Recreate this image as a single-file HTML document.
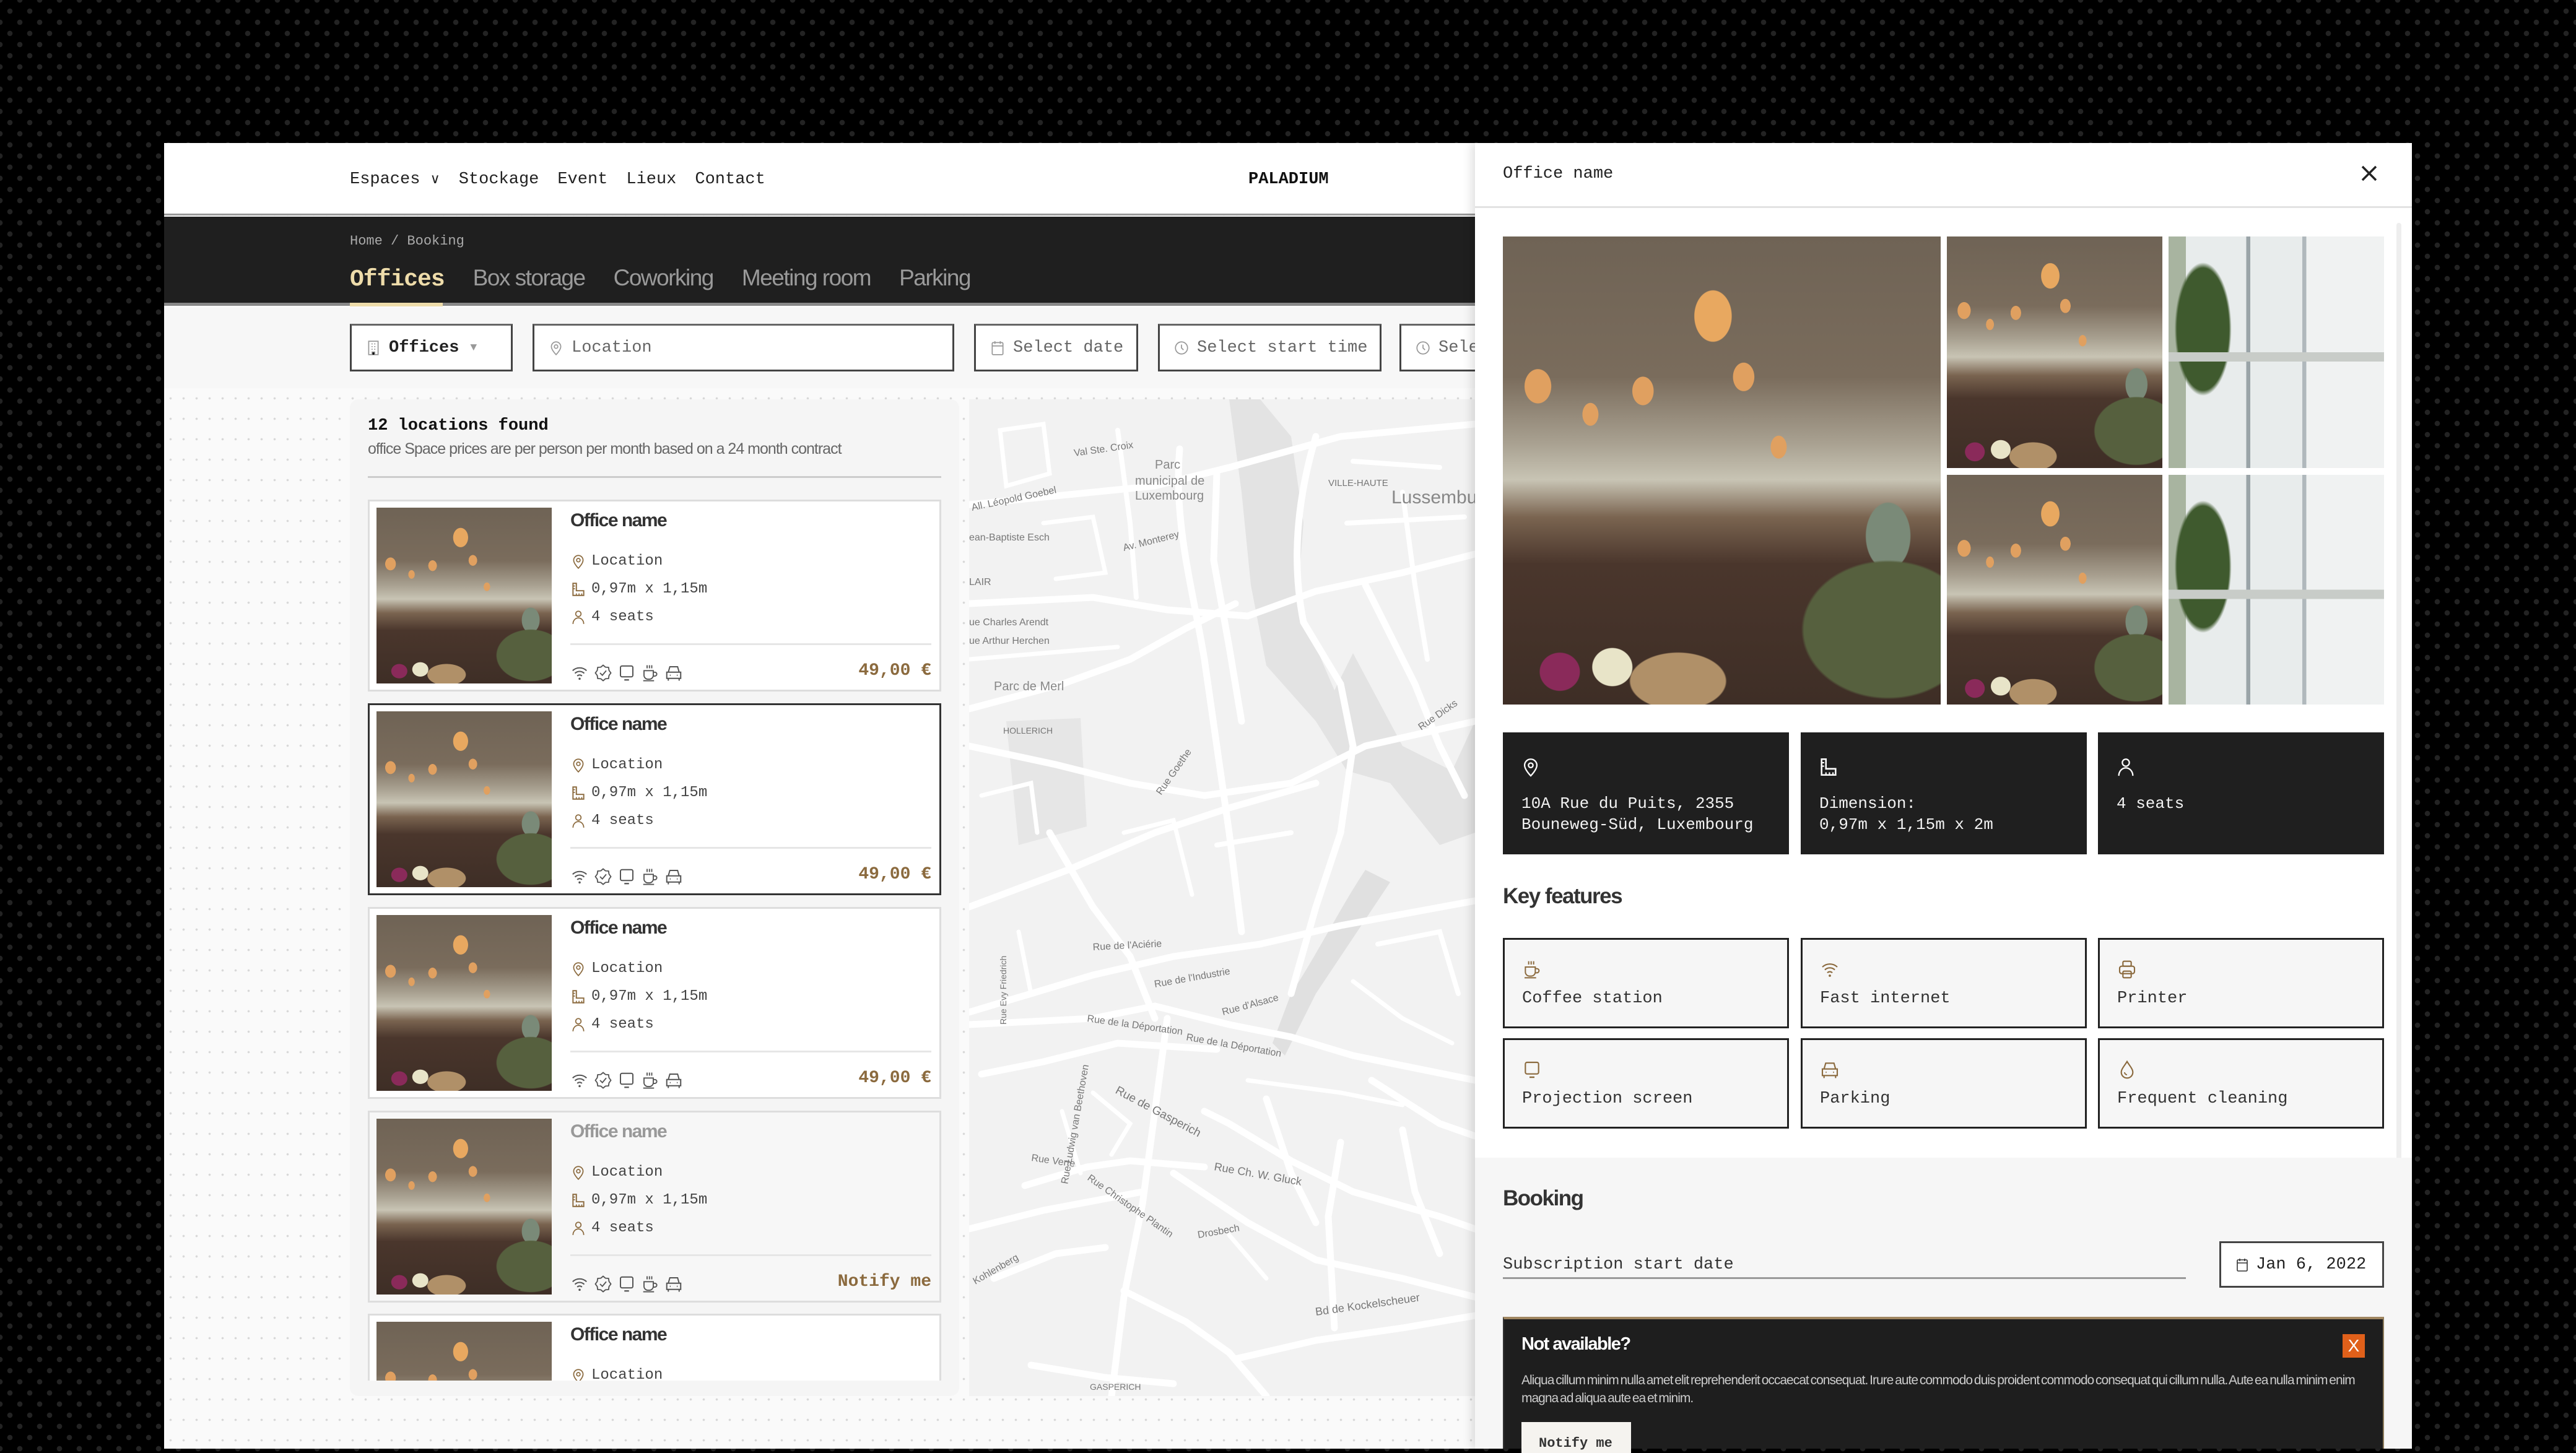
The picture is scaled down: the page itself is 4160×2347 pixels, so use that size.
<!DOCTYPE html>
<html><head><meta charset="utf-8">
<style>
*{box-sizing:border-box;margin:0;padding:0}
body{width:4160px;height:2340px;overflow:hidden;position:relative;background:#000;
background-image:radial-gradient(circle,#232323 4px,transparent 4.5px),radial-gradient(circle,#232323 4px,transparent 4.5px);
background-size:32px 36px,32px 36px;background-position:0 0,16px 18px;font-family:"Liberation Mono",monospace}
.a{position:absolute}
.mono{font-family:"Liberation Mono",monospace}
.sans{font-family:"Liberation Sans",sans-serif}
.ph{background:
radial-gradient(ellipse 7% 9% at 48% 17%,#e8a860 0 60%,transparent 62%),
radial-gradient(ellipse 5% 6% at 8% 32%,#e0a060 0 60%,transparent 62%),
radial-gradient(ellipse 4% 5% at 32% 33%,#e0a060 0 60%,transparent 62%),
radial-gradient(ellipse 4% 5% at 55% 30%,#e0a060 0 60%,transparent 62%),
radial-gradient(ellipse 3% 4% at 20% 38%,#e0a060 0 60%,transparent 62%),
radial-gradient(ellipse 3% 4% at 63% 45%,#e0a060 0 60%,transparent 62%),
radial-gradient(ellipse 9% 8% at 25% 92%,#e8e4c8 0 50%,transparent 52%),
radial-gradient(ellipse 9% 8% at 13% 93%,#8a2a5a 0 50%,transparent 52%),
radial-gradient(ellipse 18% 10% at 40% 95%,#b09068 0 60%,transparent 62%),
radial-gradient(ellipse 32% 24% at 88% 84%,#56603e 0 60%,transparent 62%),
radial-gradient(ellipse 10% 14% at 88% 64%,#7a8a78 0 50%,transparent 52%),
linear-gradient(to bottom,#6f6355 0%,#7a6c5c 30%,#a8a090 44%,#c8c4b4 52%,#7a6450 60%,#4a362c 70%,#3e2e26 100%);
background-size:100% 100%}
.win{background:
linear-gradient(to bottom,transparent 50%,#c8ccc8 50% 54%,transparent 54%),
radial-gradient(ellipse 22% 48% at 16% 40%,#3f5a2e 0 55%,transparent 60%),
linear-gradient(to right,#a8b4a0 0 8%,#e8ecec 8% 36%,#9aa4a8 36% 38%,#e8ecec 38% 62%,#b0b8bc 62% 64%,#f0f2f2 64%);
background-size:100% 100%}
.card{position:absolute;left:594px;width:926px;height:310px;background:#fff;border:3px solid #ddd}
.card .img{position:absolute;left:11px;top:10px;width:283px;height:284px}
.card .t{position:absolute;left:324px;top:14px;font:bold 30px "Liberation Sans",sans-serif;letter-spacing:-1.5px;color:#333}
.card .r{position:absolute;left:324px;font-size:24px;color:#444;display:flex;align-items:center;gap:8px}
.card .r svg{width:26px;height:26px}
.card .hr{position:absolute;left:324px;right:13px;top:229px;height:3px;background:#e6e6e6}
.card .ic{position:absolute;left:324px;top:262px;display:flex;gap:8px}
.card .ic svg{width:30px;height:30px}
.card .p{position:absolute;right:13px;top:258px;font:bold 28px "Liberation Mono",monospace;color:#8b6a3e}
.inp{position:absolute;top:523px;height:77px;background:#fff;border:3px solid #444;border-top-color:#666;display:flex;align-items:center;padding-left:22px;gap:12px;font-size:27px;color:#666;white-space:nowrap;overflow:hidden}
.inp svg{width:26px;height:30px;flex:none}
.info{position:absolute;top:1183px;width:462px;height:197px;background:#1f1f1f;color:#f2f2f2;font-size:26px;line-height:34px}
.info svg{position:absolute;left:28px;top:36px;width:34px;height:40px}
.info div{position:absolute;left:30px;top:98px}
.feat{position:absolute;width:462px;height:146px;background:#f6f6f6;border:3px solid #222;font-size:27px;color:#333}
.feat svg{position:absolute;left:28px;top:30px;width:32px;height:36px}
.feat div{position:absolute;left:28px;top:80px}
</style></head><body>
<svg width="0" height="0" style="position:absolute">
<defs>
<symbol id="pin" viewBox="0 0 24 24"><path d="M12 22s7-7 7-12a7 7 0 0 0-14 0c0 5 7 12 7 12z" fill="none" stroke="currentColor" stroke-width="1.6"/><circle cx="12" cy="10" r="2.6" fill="none" stroke="currentColor" stroke-width="1.6"/></symbol>
<symbol id="rul" viewBox="0 0 24 24"><path d="M4 3h5v11h11v7H4z" fill="none" stroke="currentColor" stroke-width="1.8"/><path d="M4 7h3M4 11h3M9 21v-3M13 21v-3M17 21v-3" stroke="currentColor" stroke-width="1.5"/></symbol>
<symbol id="per" viewBox="0 0 24 24"><circle cx="12" cy="7" r="4" fill="none" stroke="currentColor" stroke-width="1.6"/><path d="M4 22c0-5 3.5-9 8-9s8 4 8 9" fill="none" stroke="currentColor" stroke-width="1.6"/></symbol>
<symbol id="wifi" viewBox="0 0 24 24"><path d="M3 9a13 13 0 0 1 18 0M6 12.5a8.5 8.5 0 0 1 12 0M9 16a4 4 0 0 1 6 0" fill="none" stroke="currentColor" stroke-width="1.6"/><circle cx="12" cy="19.5" r="1.4" fill="currentColor"/></symbol>
<symbol id="bad" viewBox="0 0 24 24"><path d="M12 2l3 2.5 4 .3.6 3.9 2.4 3.3-2.4 3.3-.6 3.9-4 .3L12 22l-3-2.5-4-.3-.6-3.9L2 12l2.4-3.3.6-3.9 4-.3z" fill="none" stroke="currentColor" stroke-width="1.5"/><path d="M8 12l3 3 5-6" fill="none" stroke="currentColor" stroke-width="1.5"/></symbol>
<symbol id="mon" viewBox="0 0 24 24"><rect x="4" y="3" width="16" height="14" rx="2" fill="none" stroke="currentColor" stroke-width="1.6"/><path d="M9 21h6" stroke="currentColor" stroke-width="1.8"/></symbol>
<symbol id="cup" viewBox="0 0 24 24"><path d="M4 9h12v6a5 5 0 0 1-5 5H9a5 5 0 0 1-5-5z M16 11h2a2 2 0 0 1 0 5h-2M3 22h14M8 2v4M11 2v4M14 2v4" fill="none" stroke="currentColor" stroke-width="1.5"/></symbol>
<symbol id="car" viewBox="0 0 24 24"><path d="M5 11l2-7h10l2 7M3 11h18v8H3zM5 19v3M19 19v3M7 15h1M16 15h1" fill="none" stroke="currentColor" stroke-width="1.6"/></symbol>
<symbol id="prn" viewBox="0 0 24 24"><rect x="7" y="2" width="10" height="6" rx="1.5" fill="none" stroke="currentColor" stroke-width="1.6"/><rect x="3" y="8" width="18" height="9" rx="2.5" fill="none" stroke="currentColor" stroke-width="1.6"/><rect x="7" y="14" width="10" height="8" rx="1.5" fill="none" stroke="currentColor" stroke-width="1.6"/></symbol>
<symbol id="drop" viewBox="0 0 24 24"><path d="M12 2c3 5 7 9 7 13a7 7 0 0 1-14 0c0-4 4-8 7-13z" fill="none" stroke="currentColor" stroke-width="1.6"/><path d="M9 15a3 3 0 0 0 3 3" fill="none" stroke="currentColor" stroke-width="1.4"/></symbol>
<symbol id="cal" viewBox="0 0 24 24"><rect x="4" y="4" width="16" height="18" rx="1.5" fill="none" stroke="currentColor" stroke-width="1.6"/><path d="M4 9h16M8 2v4M16 2v4" stroke="currentColor" stroke-width="1.6"/></symbol>
<symbol id="clk" viewBox="0 0 24 24"><circle cx="12" cy="12" r="9" fill="none" stroke="currentColor" stroke-width="1.6"/><path d="M12 7v5l3 3" fill="none" stroke="currentColor" stroke-width="1.6"/></symbol>
<symbol id="bld" viewBox="0 0 24 24"><rect x="5" y="2" width="14" height="20" fill="none" stroke="currentColor" stroke-width="1.6"/><path d="M9 6h2M13 6h2M9 10h2M13 10h2M9 14h2M13 14h2M10 22v-4h4v4" stroke="currentColor" stroke-width="1.4"/></symbol>
</defs></svg>

<div class="a" style="left:265px;top:231px;width:3630px;height:2109px;background:#fafafa;
background-image:radial-gradient(circle,#d8d8d8 1.6px,transparent 2px);background-size:21px 33px"></div>
<div class="a" style="left:265px;top:231px;width:2120px;height:117px;background:#fff;border-bottom:3px solid #999"></div>
<div class="a mono" style="left:565px;top:275px;font-size:27px;color:#222;display:flex;gap:30px">
<span>Espaces <span style="font-size:22px">&#8744;</span></span><span>Stockage</span><span>Event</span><span>Lieux</span><span>Contact</span></div>
<div class="a mono" style="left:2016px;top:275px;font-size:27px;font-weight:bold;color:#111">PALADIUM</div>
<div class="a" style="left:265px;top:350px;width:2120px;height:144px;background:#1f1f1f;border-bottom:5px solid #888"></div>
<div class="a mono" style="left:565px;top:377px;font-size:22px;color:#aaa">Home / Booking</div>
<div class="a" style="left:565px;top:428px;display:flex;gap:46px;align-items:baseline">
<span class="mono" style="font-size:38px;font-weight:bold;color:#eedcaa;letter-spacing:-1px">Offices</span>
<span class="sans" style="font-size:37px;color:#9a9a9a;letter-spacing:-1.5px">Box storage</span>
<span class="sans" style="font-size:37px;color:#9a9a9a;letter-spacing:-1.5px">Coworking</span>
<span class="sans" style="font-size:37px;color:#9a9a9a;letter-spacing:-1.5px">Meeting room</span>
<span class="sans" style="font-size:37px;color:#9a9a9a;letter-spacing:-1.5px">Parking</span></div>
<div class="a" style="left:565px;top:489px;width:150px;height:6px;background:#eedcaa"></div>
<div class="a" style="left:265px;top:497px;width:2120px;height:130px;background:#f7f7f7"></div>
<div class="inp" style="left:565px;width:263px;color:#222;font-weight:bold"><svg style="color:#999"><use href="#bld"/></svg>Offices <span style="color:#999;font-size:18px;margin-left:6px">&#9660;</span></div>
<div class="inp" style="left:860px;width:681px"><svg style="color:#999"><use href="#pin"/></svg>Location</div>
<div class="inp" style="left:1573px;width:265px"><svg style="color:#999"><use href="#cal"/></svg>Select date</div>
<div class="inp" style="left:1870px;width:361px"><svg style="color:#999"><use href="#clk"/></svg>Select start time</div>
<div class="inp" style="left:2260px;width:340px"><svg style="color:#999"><use href="#clk"/></svg>Select end time</div>

<div class="a" style="left:565px;top:645px;width:984px;height:1610px;background:#f5f5f5;border-radius:14px"></div>
<div class="a mono" style="left:594px;top:673px;font-size:27px;font-weight:bold;color:#111">12 locations found</div>
<div class="a sans" style="left:594px;top:711px;font-size:25px;color:#666;letter-spacing:-1px">office Space prices are per person per month based on a 24 month contract</div>
<div class="a" style="left:594px;top:769px;width:926px;height:3px;background:#ccc"></div>

<div class="a" style="left:565px;top:790px;width:984px;height:1440px;overflow:hidden">
<div style="position:relative;left:-565px;top:-790px">
<div class="card" style="top:807px"><div class="img ph"></div><div class="t">Office name</div>
<div class="r" style="top:83px"><svg style="color:#8b6a3e"><use href="#pin"/></svg>Location</div>
<div class="r" style="top:128px"><svg style="color:#8b6a3e"><use href="#rul"/></svg>0,97m x 1,15m</div>
<div class="r" style="top:173px"><svg style="color:#8b6a3e"><use href="#per"/></svg>4 seats</div>
<div class="hr"></div><div class="ic" style="color:#555"><svg><use href="#wifi"/></svg><svg><use href="#bad"/></svg><svg><use href="#mon"/></svg><svg><use href="#cup"/></svg><svg><use href="#car"/></svg></div>
<div class="p">49,00 €</div></div>

<div class="card" style="top:1136px;border-color:#333"><div class="img ph"></div><div class="t">Office name</div>
<div class="r" style="top:83px"><svg style="color:#8b6a3e"><use href="#pin"/></svg>Location</div>
<div class="r" style="top:128px"><svg style="color:#8b6a3e"><use href="#rul"/></svg>0,97m x 1,15m</div>
<div class="r" style="top:173px"><svg style="color:#8b6a3e"><use href="#per"/></svg>4 seats</div>
<div class="hr"></div><div class="ic" style="color:#555"><svg><use href="#wifi"/></svg><svg><use href="#bad"/></svg><svg><use href="#mon"/></svg><svg><use href="#cup"/></svg><svg><use href="#car"/></svg></div>
<div class="p">49,00 €</div></div>

<div class="card" style="top:1465px"><div class="img ph"></div><div class="t">Office name</div>
<div class="r" style="top:83px"><svg style="color:#8b6a3e"><use href="#pin"/></svg>Location</div>
<div class="r" style="top:128px"><svg style="color:#8b6a3e"><use href="#rul"/></svg>0,97m x 1,15m</div>
<div class="r" style="top:173px"><svg style="color:#8b6a3e"><use href="#per"/></svg>4 seats</div>
<div class="hr"></div><div class="ic" style="color:#555"><svg><use href="#wifi"/></svg><svg><use href="#bad"/></svg><svg><use href="#mon"/></svg><svg><use href="#cup"/></svg><svg><use href="#car"/></svg></div>
<div class="p">49,00 €</div></div>

<div class="card" style="top:1794px;background:#f7f7f7"><div class="img ph"></div><div class="t" style="color:#999">Office name</div>
<div class="r" style="top:83px"><svg style="color:#8b6a3e"><use href="#pin"/></svg>Location</div>
<div class="r" style="top:128px"><svg style="color:#8b6a3e"><use href="#rul"/></svg>0,97m x 1,15m</div>
<div class="r" style="top:173px"><svg style="color:#8b6a3e"><use href="#per"/></svg>4 seats</div>
<div class="hr"></div><div class="ic" style="color:#555"><svg><use href="#wifi"/></svg><svg><use href="#bad"/></svg><svg><use href="#mon"/></svg><svg><use href="#cup"/></svg><svg><use href="#car"/></svg></div>
<div class="p">Notify me</div></div>

<div class="card" style="top:2122px"><div class="img ph"></div><div class="t">Office name</div>
<div class="r" style="top:83px"><svg style="color:#8b6a3e"><use href="#pin"/></svg>Location</div></div>
</div></div>

<svg class="a" style="left:1565px;top:645px" width="817" height="1610" viewBox="0 0 817 1610">
<rect width="817" height="1610" fill="#f2f2f2"/>
<path d="M470 0 L520 60 L540 200 L530 330 L590 470 L620 410 L700 560 L780 600 L817 520 L817 700 L760 720 L680 620 L610 600 L560 520 L480 430 L455 300 L440 150 L420 0Z" fill="#e3e3e3"/>
<path d="M60 520 L180 515 L190 690 L80 720Z" fill="#e6e6e6"/>
<path d="M640 760 C600 820 560 900 520 960 L490 1040 L510 1060 L560 960 C600 900 640 840 680 780Z" fill="#e0e0e0"/>
<g stroke="#fff" stroke-width="11" fill="none" stroke-linecap="round">
<path d="M0 170 L300 140 L420 110 L600 60 L817 40"/>
<path d="M0 330 L200 320 L320 340 L450 350 L560 310 L700 280 L817 250"/>
<path d="M0 500 L150 460 L260 420 L350 370 L430 330"/>
<path d="M0 560 L140 590 L260 620 L380 640 L520 620 L640 560 L817 520"/>
<path d="M340 80 C330 200 360 300 380 420 L400 560 L420 700 L440 860"/>
<path d="M400 120 L395 260 L420 400 L440 520"/>
<path d="M560 60 C530 160 520 260 540 360 L600 460 L620 560 L600 700 L560 820 L520 960"/>
<path d="M640 300 L680 380 L720 460 L760 560 L800 640"/>
<path d="M130 700 L200 820 L260 900 L300 1000"/>
<path d="M0 820 L160 760 L300 700 L420 660 L560 620"/>
<path d="M0 990 L200 930 L330 900 L470 880 L600 850 L817 810"/>
<path d="M0 1010 L200 1000 L300 980 L420 1010 L520 1030 L620 1060 L817 1100"/>
<path d="M20 1090 L120 1070 L240 1040 L400 1050"/>
<path d="M320 1000 L300 1150 L280 1300 L250 1450 L230 1610"/>
<path d="M380 1150 L420 1170 L520 1230 L620 1280 L760 1320 L817 1340"/>
<path d="M90 1270 L190 1240 L260 1230 L380 1240"/>
<path d="M0 1340 L120 1310 L280 1280"/>
<path d="M250 1440 L350 1490 L420 1540 L480 1610"/>
<path d="M430 1550 L560 1520 L700 1500 L817 1480"/>
<path d="M330 1250 L450 1330 L560 1390 L700 1420 L817 1450"/>
<path d="M600 1200 L580 1320 L590 1500"/>
<path d="M480 1130 L520 1250 L560 1330"/>
<path d="M700 1180 L720 1280 L760 1380"/>
<path d="M650 1100 L760 1170 L817 1190"/>
<path d="M40 1420 L140 1380 L220 1370"/>
<path d="M100 1560 L220 1580 L330 1590"/>
<path d="M50 50 L120 40 L130 120 L60 140Z" stroke-width="7"/>
<path d="M240 50 L260 200 L270 320" stroke-width="8"/>
<path d="M120 200 L200 190 L220 280 L140 290" stroke-width="7"/>
<path d="M700 150 L720 300 L740 420" stroke-width="8"/>
<path d="M620 100 L760 110" stroke-width="8"/>
<path d="M610 200 L800 190" stroke-width="8"/>
<path d="M20 640 L100 620 L110 700" stroke-width="7"/>
<path d="M250 700 L330 680 L360 800" stroke-width="7"/>
<path d="M400 720 L520 700" stroke-width="8"/>
<path d="M660 880 L760 860 L790 960" stroke-width="8"/>
<path d="M200 1120 L260 1170 L230 1220" stroke-width="7"/>
<path d="M420 1350 L480 1420" stroke-width="7"/>
<path d="M0 420 L120 410 L240 400" stroke-width="7"/>
<path d="M80 860 L100 960" stroke-width="7"/>
<path d="M150 1150 L180 1250" stroke-width="7"/>
<path d="M620 940 L700 1000 L780 1040" stroke-width="7"/>
<path d="M450 1100 L600 1120 L700 1140" stroke-width="7"/>
</g>
<g font-family="Liberation Sans, sans-serif" fill="#777" font-size="16">
<text x="170" y="92" transform="rotate(-8 170 92)">Val Ste. Croix</text>
<text x="5" y="180" transform="rotate(-12 5 180)">All. Léopold Goebel</text>
<text x="0" y="228">ean-Baptiste Esch</text>
<text x="0" y="300">LAIR</text>
<text x="0" y="365">ue Charles Arendt</text>
<text x="0" y="395">ue Arthur Herchen</text>
<text x="300" y="112" font-size="20" fill="#888">Parc</text>
<text x="268" y="138" font-size="20" fill="#888">municipal de</text>
<text x="268" y="162" font-size="20" fill="#888">Luxembourg</text>
<text x="580" y="140" font-size="15">VILLE-HAUTE</text>
<text x="682" y="168" font-size="30" fill="#888">Lussembur</text>
<text x="40" y="470" font-size="20" fill="#888">Parc de Merl</text>
<text x="55" y="540" font-size="14">HOLLERICH</text>
<text x="250" y="245" transform="rotate(-14 250 245)">Av. Monterey</text>
<text x="310" y="640" transform="rotate(-55 310 640)">Rue Goethe</text>
<text x="730" y="535" transform="rotate(-35 730 535)">Rue Dicks</text>
<text x="200" y="890" transform="rotate(-3 200 890)">Rue de l'Aciérie</text>
<text x="300" y="950" transform="rotate(-10 300 950)">Rue de l'Industrie</text>
<text x="190" y="1005" transform="rotate(8 190 1005)">Rue de la Déportation</text>
<text x="350" y="1035" transform="rotate(10 350 1035)">Rue de la Déportation</text>
<text x="410" y="995" transform="rotate(-15 410 995)">Rue d'Alsace</text>
<text x="235" y="1120" font-size="19" transform="rotate(28 235 1120)">Rue de Gasperich</text>
<text x="60" y="1010" transform="rotate(-90 60 1010)" font-size="14">Rue Evy Friedrich</text>
<text x="60" y="1150" transform="rotate(-80 180 1150)">Rue Ludwig van Beethoven</text>
<text x="100" y="1230" transform="rotate(8 100 1230)">Rue Verte</text>
<text x="395" y="1245" font-size="18" transform="rotate(10 395 1245)">Rue Ch. W. Gluck</text>
<text x="190" y="1260" transform="rotate(35 190 1260)">Rue Christophe Plantin</text>
<text x="370" y="1355" transform="rotate(-10 370 1355)">Drosbech</text>
<text x="560" y="1480" font-size="18" transform="rotate(-8 560 1480)">Bd de Kockelscheuer</text>
<text x="195" y="1600" font-size="14">GASPERICH</text>
<text x="10" y="1430" transform="rotate(-30 10 1430)">Kohlenberg</text>
</g>
</svg>

<div class="a" style="left:2382px;top:231px;width:1513px;height:2109px;background:#fff;box-shadow:-6px 0 14px rgba(0,0,0,.12)"></div>
<div class="a mono" style="left:2427px;top:266px;font-size:27px;color:#222">Office name</div>
<svg class="a" style="left:3812px;top:266px" width="28" height="28" viewBox="0 0 28 28"><path d="M3 3L25 25M25 3L3 25" stroke="#222" stroke-width="3.5"/></svg>
<div class="a" style="left:2382px;top:333px;width:1513px;height:3px;background:#e2e2e2"></div>
<div class="a" style="left:3870px;top:360px;width:8px;height:1780px;background:#eee;border-radius:4px"></div>
<div class="a ph" style="left:2427px;top:382px;width:707px;height:756px"></div>
<div class="a ph" style="left:3144px;top:382px;width:348px;height:374px"></div>
<div class="a win" style="left:3502px;top:382px;width:348px;height:374px"></div>
<div class="a ph" style="left:3144px;top:767px;width:348px;height:371px"></div>
<div class="a win" style="left:3502px;top:767px;width:348px;height:371px"></div>

<div class="info" style="left:2427px"><svg style="color:#fff"><use href="#pin"/></svg><div>10A Rue du Puits, 2355<br>Bouneweg-Süd, Luxembourg</div></div>
<div class="info" style="left:2908px"><svg style="color:#fff"><use href="#rul"/></svg><div>Dimension:<br>0,97m x 1,15m x 2m</div></div>
<div class="info" style="left:3388px"><svg style="color:#fff"><use href="#per"/></svg><div>4 seats</div></div>

<div class="a sans" style="left:2427px;top:1428px;font-size:35px;font-weight:bold;color:#333;letter-spacing:-1.5px">Key features</div>
<div class="feat" style="left:2427px;top:1515px"><svg style="color:#8b6a3e"><use href="#cup"/></svg><div>Coffee station</div></div>
<div class="feat" style="left:2908px;top:1515px"><svg style="color:#8b6a3e"><use href="#wifi"/></svg><div>Fast internet</div></div>
<div class="feat" style="left:3388px;top:1515px"><svg style="color:#8b6a3e"><use href="#prn"/></svg><div>Printer</div></div>
<div class="feat" style="left:2427px;top:1677px"><svg style="color:#8b6a3e"><use href="#mon"/></svg><div>Projection screen</div></div>
<div class="feat" style="left:2908px;top:1677px"><svg style="color:#8b6a3e"><use href="#car"/></svg><div>Parking</div></div>
<div class="feat" style="left:3388px;top:1677px"><svg style="color:#8b6a3e"><use href="#drop"/></svg><div>Frequent cleaning</div></div>

<div class="a" style="left:2382px;top:1870px;width:1513px;height:470px;background:#f6f6f6"></div>
<div class="a sans" style="left:2427px;top:1916px;font-size:35px;font-weight:bold;color:#333;letter-spacing:-1.5px">Booking</div>
<div class="a mono" style="left:2427px;top:2028px;font-size:27px;color:#333">Subscription start date</div>
<div class="a" style="left:2427px;top:2063px;width:1103px;height:3px;background:#999"></div>
<div class="a mono" style="left:3584px;top:2005px;width:266px;height:75px;background:#fff;border:3px solid #444;display:flex;align-items:center;padding-left:22px;gap:10px;font-size:27px;color:#222"><svg width="24" height="30" style="color:#333"><use href="#cal"/></svg>Jan 6, 2022</div>

<div class="a" style="left:2427px;top:2127px;width:1423px;height:213px;background:#1e1e1e;border-top:4px solid #a08660;border-left:2px solid #333;border-right:2px solid #8b7a5a"></div>
<div class="a sans" style="left:2457px;top:2155px;font-size:29px;font-weight:bold;color:#fff;letter-spacing:-1.5px">Not available?</div>
<div class="a sans" style="left:3783px;top:2155px;width:36px;height:38px;background:#e0601a;color:#fff;font-size:28px;text-align:center;line-height:38px">X</div>
<div class="a sans" style="left:2457px;top:2215px;width:1370px;font-size:21px;line-height:29px;color:#ccc;letter-spacing:-1px;word-spacing:-2px">Aliqua cillum minim nulla amet elit reprehenderit occaecat consequat. Irure aute commodo duis proident commodo consequat qui cillum nulla. Aute ea nulla minim enim magna ad aliqua aute ea et minim.</div>
<div class="a mono" style="left:2457px;top:2297px;width:177px;height:50px;background:#f5f3ef;font-size:22px;font-weight:bold;color:#333;padding:22px 0 0 28px">Notify me</div>
</body></html>
